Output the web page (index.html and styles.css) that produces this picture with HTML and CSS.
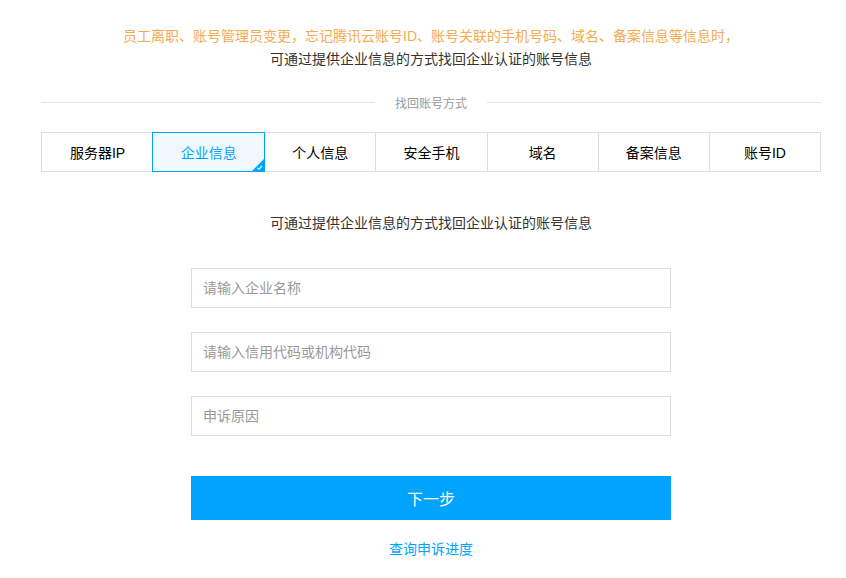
FILE: index.html
```html
<!DOCTYPE html>
<html lang="zh-CN">
<head>
<meta charset="utf-8">
<title>找回账号</title>
<link rel="stylesheet" href="styles.css">
</head>
<body>
<div class="page">
  <div class="notice">
    <p class="notice-warn">员工离职、账号管理员变更，忘记腾讯云账号ID、账号关联的手机号码、域名、备案信息等信息时，</p>
    <p class="notice-main">可通过提供企业信息的方式找回企业认证的账号信息</p>
  </div>
  <div class="divider"><span class="divider-label">找回账号方式</span></div>
  <ul class="tabs">
    <li class="tab">服务器IP</li>
    <li class="tab active">企业信息
      <span class="tab-corner"><svg viewBox="0 0 12 12" width="12" height="12"><path d="M0 12 L12 0 L12 12 Z" fill="#00a4ff"/><path d="M5.2 8.8 L6.9 10.3 L10 7" fill="none" stroke="#fff" stroke-width="1.1"/></svg></span>
    </li>
    <li class="tab">个人信息</li>
    <li class="tab">安全手机</li>
    <li class="tab">域名</li>
    <li class="tab">备案信息</li>
    <li class="tab">账号ID</li>
  </ul>
  <p class="desc">可通过提供企业信息的方式找回企业认证的账号信息</p>
  <form class="form">
    <input class="field" type="text" placeholder="请输入企业名称">
    <input class="field" type="text" placeholder="请输入信用代码或机构代码">
    <input class="field" type="text" placeholder="申诉原因">
    <button class="submit" type="button">下一步</button>
    <a class="progress-link" href="#">查询申诉进度</a>
  </form>
</div>
</body>
</html>
```

FILE: styles.css
```css
* { box-sizing: border-box; }
body {
  margin: 0;
  background: #fff;
  font-family: "Liberation Sans", "Noto Sans CJK SC", sans-serif;
  font-size: 14px;
  color: #333;
}
.page {
  width: 780px;
  margin-left: 41px;
  padding-top: 25px;
}
.notice { text-align: center; }
.notice p { margin: 0; line-height: 23px; }
.notice-warn { color: #f5ab50; }
.notice-main { color: #333; }
.divider {
  display: flex;
  align-items: center;
  margin-top: 21px;
  height: 20px;
  font-size: 12px;
  color: #999;
}
.divider::before, .divider::after {
  content: "";
  flex: 1;
  height: 1px;
  background: #e5e5e5;
}
.divider-label { padding: 0 20px; }
.tabs {
  list-style: none;
  margin: 20px 0 0;
  padding: 0;
  display: grid;
  grid-template-columns: repeat(7, 1fr);
  border: 1px solid #ddd;
  height: 40px;
}
.tab {
  position: relative;
  display: flex;
  align-items: center;
  justify-content: center;
  border-left: 1px solid #ddd;
  color: #000;
  font-size: 14px;
}
.tab:first-child { border-left: none; }
.tab.active {
  margin: -1px;
  border: 1px solid #00a4ff;
  background: #f0f8ff;
  color: #00a4ff;
  z-index: 1;
}
.tab-corner {
  position: absolute;
  right: 0;
  bottom: 0;
  width: 12px;
  height: 12px;
  line-height: 0;
}
.desc {
  margin: 41px 0 0;
  text-align: center;
  line-height: 20px;
}
.form {
  width: 480px;
  margin: 35px auto 0;
  display: flex;
  flex-direction: column;
  align-items: center;
}
.field {
  width: 100%;
  height: 40px;
  border: 1px solid #ddd;
  padding: 0 11px;
  font-family: inherit;
  font-size: 14px;
  color: #333;
  outline: none;
  margin: 0 0 24px;
}
.field::placeholder { color: #999; }
.submit {
  width: 100%;
  height: 44px;
  margin-top: 16px;
  border: none;
  background: #00a4ff;
  color: #fff;
  font-family: inherit;
  font-size: 16px;
}
.progress-link {
  margin-top: 19px;
  color: #00a4ff;
  text-decoration: none;
  line-height: 20px;
}
```
